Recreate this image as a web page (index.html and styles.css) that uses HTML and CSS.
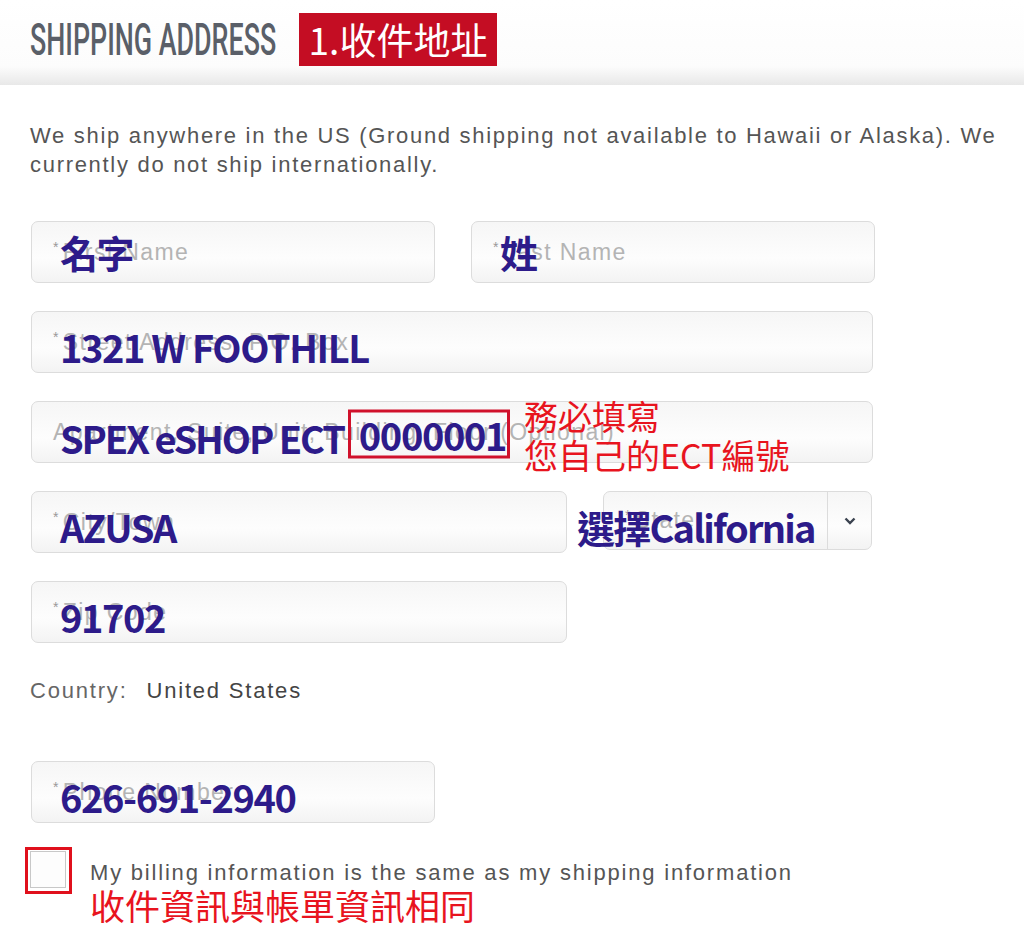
FILE: index.html
```html
<!DOCTYPE html>
<html lang="zh-Hant">
<head>
  <meta charset="UTF-8" />
  <meta name="viewport" content="width=device-width, initial-scale=1" />
  <title>Shipping Address</title>
  <link rel="stylesheet" href="styles.css">
</head>
<body>

  <header class="page-head">
    <h1 class="head-title"><span>SHIPPING ADDRESS</span></h1>
    <span class="step-tag">1.收件地址</span>
  </header>

  <main class="form-wrap">
    <p class="intro">We ship anywhere in the US (Ground shipping not available to Hawaii or Alaska). We currently do not ship internationally.</p>

    <div class="row">
      <div class="field half">
        <span class="ph"><i>*</i>First Name</span>
        <span class="note">名字</span>
      </div>
      <div class="field half">
        <span class="ph"><i>*</i>Last Name</span>
        <span class="note">姓</span>
      </div>
    </div>

    <div class="row">
      <div class="field full">
        <span class="ph"><i>*</i>Street Address, P.O. Box</span>
        <span class="note latin">1321 W FOOTHILL</span>
      </div>
    </div>

    <div class="row">
      <div class="field full">
        <span class="ph">Apartment, Suite, Unit, Building, Floor (Optional)</span>
        <span class="note latin spex">SPEX eSHOP ECT<b class="mark">0000001</b></span>
        <span class="callout">務必填寫<br>您自己的ECT編號</span>
      </div>
    </div>

    <div class="row">
      <div class="field city">
        <span class="ph"><i>*</i>City/Town</span>
        <span class="note latin">AZUSA</span>
      </div>
      <div class="field state">
        <span class="ph"><i>*</i>State</span>
        <span class="caret">
          <svg width="12" height="8" viewBox="0 0 12 8"><path d="M1.5 1.5 L6 6 L10.5 1.5" fill="none" stroke="#3b4350" stroke-width="2.4"/></svg>
        </span>
        <span class="note latin state-note">選擇California</span>
      </div>
    </div>

    <div class="row">
      <div class="field city">
        <span class="ph"><i>*</i>Zip Code</span>
        <span class="note latin">91702</span>
      </div>
    </div>

    <div class="country">
      <span class="country-label">Country:</span>
      <span class="country-value">United States</span>
    </div>

    <div class="row">
      <div class="field half">
        <span class="ph"><i>*</i>Phone Number</span>
        <span class="note latin">626-691-2940</span>
      </div>
    </div>

    <div class="billing">
      <span class="check-mark"><span class="check-box"></span></span>
      <div class="billing-text">
        <span class="billing-label">My billing information is the same as my shipping information</span>
        <span class="billing-note">收件資訊與帳單資訊相同</span>
      </div>
    </div>
  </main>

</body>
</html>
```

FILE: styles.css
```css
body {
  margin: 0;
  background: #fff;
  font-family: "Liberation Sans", Arial, sans-serif;
  color: #555;
}
.page-head {
  height: 85px;
  display: flex;
  align-items: flex-start;
  padding-left: 30px;
  background: linear-gradient(to bottom, #fff 0, #fcfcfc 78%, #e8e8e8 100%);
  box-sizing: border-box;
}
.head-title {
  margin: 14px 0 0;
  width: 269px;
  white-space: nowrap;
  font-family: "Roboto", sans-serif;
  font-weight: 500;
  font-size: 44px;
  line-height: 52px;
  color: #5a5f68;
}
.head-title span {
  display: inline-block;
  transform: scaleX(0.61);
  transform-origin: left center;
}
.step-tag {
  margin-top: 13px;
  width: 198px;
  height: 53px;
  background: #c40d23;
  color: #fff;
  font-family: "Noto Sans CJK TC", sans-serif;
  font-size: 37px;
  line-height: 53px;
  text-align: center;
}
.form-wrap {
  padding: 0 18px 0 31px;
}
.intro {
  margin: 36px 0 42px -1px;
  font-size: 22px;
  line-height: 29px;
  color: #555;
  letter-spacing: 1.7px;
}
.row {
  display: flex;
  gap: 36px;
  margin-bottom: 28px;
}
.field {
  position: relative;
  height: 62px;
  box-sizing: border-box;
  border: 1px solid #dcdcdc;
  border-radius: 7px;
  background: linear-gradient(to bottom, #f6f6f6 0, #fdfdfd 60%, #f3f3f3 100%);
  display: flex;
  align-items: center;
  padding-left: 21px;
}
.half { width: 404px; }
.full { width: 842px; }
.city { width: 536px; }
.state { width: 269px; height: 59px; }
.ph {
  font-size: 23px;
  color: #b4b4b4;
  letter-spacing: 1.4px;
  white-space: nowrap;
}
.ph i {
  font-style: normal;
  font-size: 14px;
  vertical-align: 8px;
  margin-right: 3px;
  color: #999;
}
.note {
  position: absolute;
  left: 28px;
  top: 50%;
  transform: translateY(-50%);
  white-space: nowrap;
  font-family: "Noto Sans CJK TC", sans-serif;
  font-weight: 700;
  font-size: 38px;
  line-height: 46px;
  color: #2d1b8a;
  letter-spacing: -1.4px;
}
.latin {
  top: calc(50% + 5px);
}
.spex {
  letter-spacing: -2.1px;
}
.mark {
  display: inline-block;
  margin-left: 4px;
  padding: 0 1px 0 8px;
  border: 3px solid #d0112b;
  line-height: 43px;
  font-weight: 700;
  letter-spacing: -1.4px;
  transform: translateY(-3px);
}
.callout {
  position: absolute;
  left: 492px;
  top: -6px;
  font-family: "Noto Sans CJK TC", sans-serif;
  font-size: 34px;
  line-height: 39px;
  color: #e8141e;
  white-space: nowrap;
}
.caret {
  position: absolute;
  right: 0;
  top: 0;
  bottom: 0;
  width: 43px;
  border-left: 1px solid #dcdcdc;
  display: flex;
  align-items: center;
  justify-content: center;
}
.state-note {
  left: -27px;
  top: calc(50% + 6px);
  letter-spacing: -1.8px;
}
.country {
  margin: 35px 0 0 -1px;
  height: 83px;
  font-size: 22px;
  letter-spacing: 1.8px;
}
.country-label {
  color: #666;
  margin-right: 11px;
}
.country-value {
  color: #444;
}
.billing {
  display: flex;
  margin-left: -6px;
  margin-top: -4px;
}
.check-mark {
  width: 47px;
  height: 47px;
  box-sizing: border-box;
  border: 3px solid #e0101c;
  padding: 1px 3px 3px 2px;
}
.check-box {
  display: block;
  height: 100%;
  border: 1px solid #c8c8c8;
  background: #fdfdfd;
  box-sizing: border-box;
}
.billing-text {
  display: flex;
  flex-direction: column;
  margin-left: 18px;
  padding-top: 13px;
}
.billing-label {
  font-size: 22px;
  line-height: 26px;
  color: #555;
  letter-spacing: 1.8px;
  white-space: nowrap;
}
.billing-note {
  font-family: "Noto Sans CJK TC", sans-serif;
  font-size: 35px;
  line-height: 38px;
  color: #e8141e;
}
```
